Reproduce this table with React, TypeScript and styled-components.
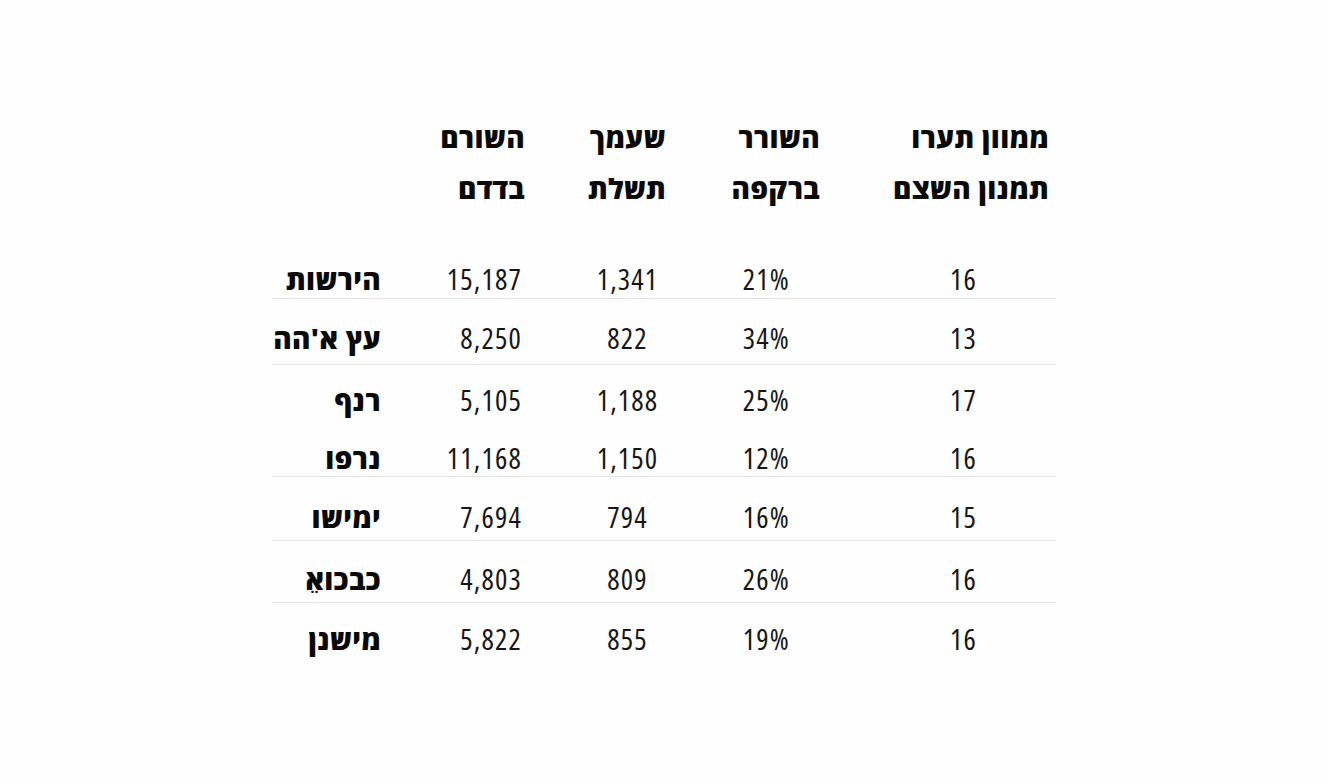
import React from "react";
import styled, { createGlobalStyle } from "styled-components";

const Global = createGlobalStyle`
  html, body { margin: 0; padding: 0; background: #ffffff; }
  body { font-family: "Open Sans", "Liberation Sans", Arial, sans-serif; color: #111; }
`;

const Page = styled.div`
  width: 1328px;
  height: 784px;
  display: flex;
  justify-content: center;
  padding-top: 112px;
  box-sizing: border-box;
  background: #fefefe;
`;

const Table = styled.div`
  width: 784px;
  display: flex;
  flex-direction: column;
`;

const COLS = "119px 139px 150px 150px 226px";

const HeadRow = styled.div`
  display: grid;
  grid-template-columns: ${COLS};
  margin-bottom: 36px;
`;

const HeadCell = styled.div<{ $pr: number }>`
  direction: rtl;
  text-align: right;
  padding-right: ${(p) => p.$pr}px;
  font-family: "Open Sans", "DejaVu Sans Condensed", sans-serif;
  font-weight: 800;
  font-size: 28px;
  letter-spacing: 0.3px;
  line-height: 51px;
  color: #0a0a0a;
  white-space: nowrap;
`;

const Row = styled.div<{ $h: number; $pt: number; $line: boolean }>`
  display: grid;
  grid-template-columns: ${COLS};
  align-items: start;
  height: ${(p) => p.$h}px;
  padding-top: ${(p) => p.$pt}px;
  box-sizing: border-box;
  border-bottom: ${(p) => (p.$line ? "1px solid #e2e2e2" : "1px solid transparent")};
`;

const Label = styled.div`
  direction: rtl;
  text-align: right;
  padding-right: 10px;
  font-family: "Open Sans", "DejaVu Sans Condensed", sans-serif;
  font-weight: 800;
  font-size: 28px;
  letter-spacing: 0.3px;
  line-height: 30px;
  color: #0a0a0a;
  white-space: nowrap;
`;

const Value = styled.div<{ $align: "left" | "right" | "center"; $pl?: number; $pr?: number }>`
  text-align: ${(p) => p.$align};
  padding-left: ${(p) => p.$pl ?? 0}px;
  padding-right: ${(p) => p.$pr ?? 0}px;
  font-family: "Open Sans", "DejaVu Sans Condensed", sans-serif;
  font-stretch: condensed;
  font-weight: 400;
  font-size: 29px;
  letter-spacing: 1.2px;
  line-height: 30px;
  color: #161616;
  white-space: nowrap;
`;

const headers: [string, string, number][] = [
  ["השורם", "בדדם", 5],
  ["שעמך", "תשלת", 14],
  ["השורר", "ברקפה", 10],
  ["ממוון תערו", "תמנון השצם", 7],
];

type R = { label: string; a: string; b: string; c: string; d: string; h: number; pt: number; line: boolean };

const rows: R[] = [
  { label: "הירשות", a: "15,187", b: "1,341", c: "21%", d: "16", h: 49, pt: 14, line: true },
  { label: "עץ א'הה", a: "8,250", b: "822", c: "34%", d: "13", h: 66, pt: 24, line: true },
  { label: "רנף", a: "5,105", b: "1,188", c: "25%", d: "17", h: 63, pt: 20, line: false },
  { label: "נרפו", a: "11,168", b: "1,150", c: "12%", d: "16", h: 49, pt: 15, line: true },
  { label: "ימישו", a: "7,694", b: "794", c: "16%", d: "15", h: 64, pt: 25, line: true },
  { label: "כבכואֵ", a: "4,803", b: "809", c: "26%", d: "16", h: 62, pt: 23, line: true },
  { label: "מישנן", a: "5,822", b: "855", c: "19%", d: "16", h: 60, pt: 21, line: false },
];

export default function App() {
  return (
    <>
      <Global />
      <Page>
        <Table>
          <HeadRow>
            <div />
            {headers.map(([l1, l2, pr]) => (
              <HeadCell key={l1} $pr={pr}>
                {l1}
                <br />
                {l2}
              </HeadCell>
            ))}
          </HeadRow>
          {rows.map((r) => (
            <Row key={r.label} $h={r.h} $pt={r.pt} $line={r.line}>
              <Label>{r.label}</Label>
              <Value $align="right" $pr={8}>{r.a}</Value>
              <Value $align="center" $pl={45}>{r.b}</Value>
              <Value $align="right" $pr={40}>{r.c}</Value>
              <Value $align="center" $pl={41}>{r.d}</Value>
            </Row>
          ))}
        </Table>
      </Page>
    </>
  );
}
